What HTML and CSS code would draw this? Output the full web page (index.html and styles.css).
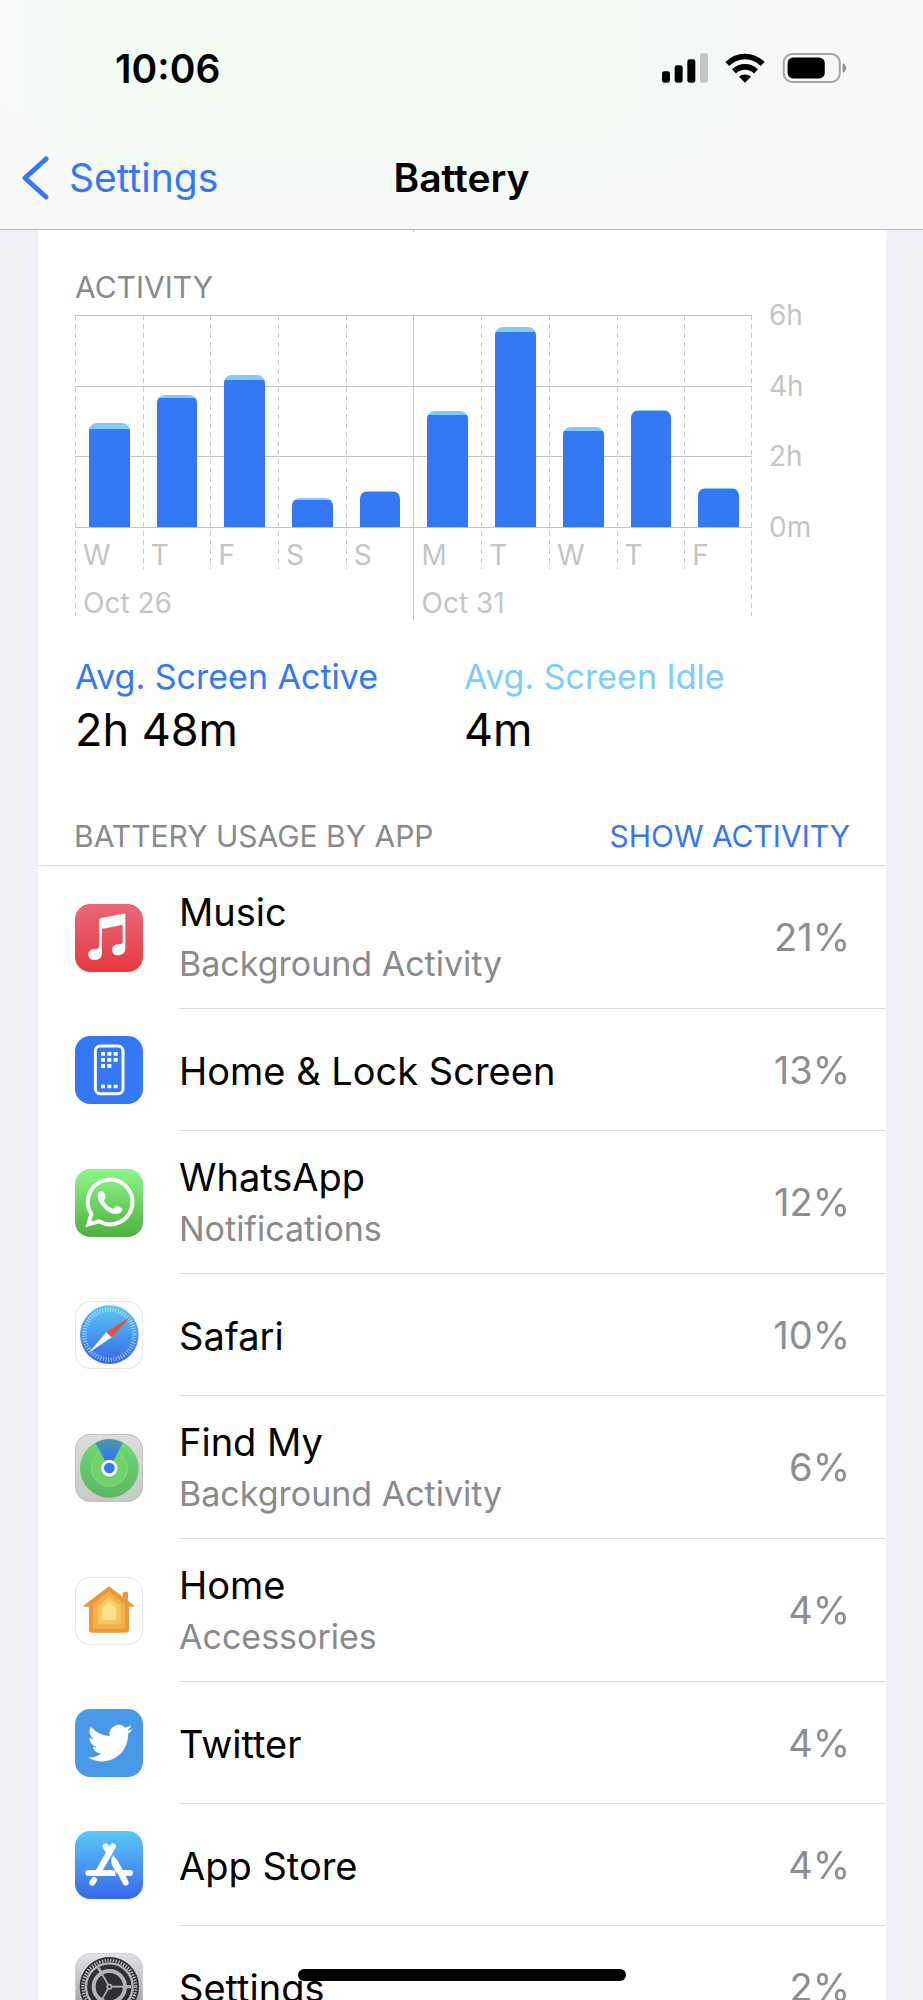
FILE: index.html
```html
<!DOCTYPE html>
<html lang="en">
<head>
<meta charset="utf-8">
<meta name="viewport" content="width=device-width, initial-scale=1">
<title>Battery</title>
<link rel="stylesheet" href="styles.css">
</head>
<body>
<div class="screen">
  <header class="top">
    <div class="status">
      <time class="clock">10:06</time>
      <div class="status-icons">
        <svg width="46" height="30" viewBox="0 0 138 90" aria-hidden="true">
          <rect x="0" y="55" width="24" height="34" rx="7"/><rect x="38" y="37" width="24" height="52" rx="7"/><rect x="76" y="19" width="24" height="70" rx="7"/><rect x="114" y="1" width="24" height="88" rx="7" fill="#c3c8c4"/>
        </svg>
        <svg width="40" height="30" viewBox="0 0 120 90" aria-hidden="true">
          <g fill="none" stroke="#000" stroke-width="17"><path d="M7 33C37 3 83 3 113 33"/><path d="M27 55C46 37 74 37 93 55"/></g>
          <path d="M42 71C52 62 68 62 78 71L60 89Z"/>
        </svg>
        <svg width="65" height="30" viewBox="0 0 195 92" aria-hidden="true">
          <rect x="3" y="3" width="172" height="86" rx="27" fill="none" stroke="#a2a5a3" stroke-width="6"/>
          <rect x="15" y="14" width="114" height="64" rx="17"/><path d="M184 31Q194 36 194 46T184 61Z" fill="#8e908f"/>
        </svg>
      </div>
    </div>
    <nav class="nav">
      <a class="back" href="#">
        <svg width="28" height="44" viewBox="0 0 28 44" aria-hidden="true"><path d="M25 3L4 22L25 41" fill="none" stroke="#3478f6" stroke-width="5" stroke-linecap="round" stroke-linejoin="round"/></svg>
        Settings
      </a>
      <h1 class="title">Battery</h1>
    </nav>
  </header>

  <main class="card">
    <div class="tick"></div>
    <section class="activity">
      <h2 class="caption">ACTIVITY</h2>
      <div class="chart">
        <div class="plot">
          <div class="day edge"><div class="slot"><div class="bar idle-6" style="height:49%"></div></div><span class="label">W</span><span class="label date">Oct 26</span></div>
          <div class="day"><div class="slot"><div class="bar idle-3" style="height:62.3%"></div></div><span class="label">T</span></div>
          <div class="day"><div class="slot"><div class="bar idle-5" style="height:71.5%"></div></div><span class="label">F</span></div>
          <div class="day"><div class="slot"><div class="bar idle-2" style="height:13.9%"></div></div><span class="label">S</span></div>
          <div class="day"><div class="slot"><div class="bar idle-1" style="height:17%"></div></div><span class="label">S</span></div>
          <div class="day week"><div class="slot"><div class="bar idle-4" style="height:54.7%"></div></div><span class="label">M</span><span class="label date">Oct 31</span></div>
          <div class="day"><div class="slot"><div class="bar idle-5" style="height:94.3%"></div></div><span class="label">T</span></div>
          <div class="day"><div class="slot"><div class="bar idle-4" style="height:47.2%"></div></div><span class="label">W</span></div>
          <div class="day"><div class="slot"><div class="bar idle-1" style="height:55.2%"></div></div><span class="label">T</span></div>
          <div class="day"><div class="slot"><div class="bar idle-1" style="height:18.6%"></div></div><span class="label">F</span></div>
        </div>
        <div class="axis"><span>6h</span><span>4h</span><span>2h</span><span>0m</span></div>
      </div>
      <dl class="stats">
        <div><dt class="active">Avg. Screen Active</dt><dd>2h 48m</dd></div>
        <div><dt class="idle">Avg. Screen Idle</dt><dd>4m</dd></div>
      </dl>
    </section>

    <section>
      <div class="list-head">
        <h2 class="caption">BATTERY USAGE BY APP</h2>
        <button class="toggle" type="button">SHOW ACTIVITY</button>
      </div>
      <ul class="apps">
        <li class="app">
          <svg class="icon" viewBox="0 0 204 204" aria-hidden="true">
            <defs><linearGradient id="music" x2="0" y2="1"><stop stop-color="#e8697b"/><stop offset="1" stop-color="#e6393f"/></linearGradient></defs>
            <rect width="204" height="204" rx="46" fill="url(#music)"/>
            <path fill="#fff" d="M73 49Q73 43 79 42L146 29Q151 28 151 34V133C151 147 142 154 129 154C118 154 111 147 111 138C111 128 119 122 129 121L138 120Q143 119 143 114V62L81 75V146C81 160 72 168 59 168C48 168 40 161 40 152C40 142 48 136 58 135L67 134Q73 133 73 127Z"/>
          </svg>
          <div class="info"><div class="text"><span class="name">Music</span><span class="note">Background Activity</span></div><span class="pct">21%</span></div>
        </li>
        <li class="app">
          <svg class="icon" viewBox="0 0 204 204" aria-hidden="true">
            <rect width="204" height="204" rx="46" fill="#3478f6"/>
            <rect x="61" y="30" width="83" height="143" rx="15" fill="none" stroke="#fff" stroke-width="9"/>
            <path fill="#fff" d="M78 48h12v11H78zM97 48h12v11H97zM116 48h12v11h-12zM78 66h12v11H78zM97 66h12v11H97zM116 66h12v11h-12zM78 84h12v12H78zM97 84h12v12H97zM78 146h12v11H78zM97 146h12v11H97zM116 146h12v11h-12z"/>
          </svg>
          <div class="info"><div class="text"><span class="name">Home &amp; Lock Screen</span></div><span class="pct">13%</span></div>
        </li>
        <li class="app">
          <svg class="icon" viewBox="0 0 204 204" aria-hidden="true">
            <defs><linearGradient id="wa" x2="0" y2="1"><stop stop-color="#8cf888"/><stop offset="1" stop-color="#4fb03f"/></linearGradient></defs>
            <rect width="204" height="204" rx="46" fill="url(#wa)"/>
            <path d="M49 135A67 67 0 1 1 72 157L40 166Z" fill="none" stroke="#fff" stroke-width="12"/>
            <path fill="#fff" d="M68 82C68 70 74 66 83 67C87 67 90 77 92 83C94 88 86 91 87 95C92 106 103 116 114 119C119 119 121 109 126 110L140 117C144 120 141 128 135 132C117 140 99 130 88 118C78 107 68 95 68 82Z"/>
          </svg>
          <div class="info"><div class="text"><span class="name">WhatsApp</span><span class="note">Notifications</span></div><span class="pct">12%</span></div>
        </li>
        <li class="app">
          <svg class="icon" viewBox="0 0 204 204" aria-hidden="true">
            <defs><linearGradient id="saf" x2="0" y2="1"><stop stop-color="#5ac8f5"/><stop offset="1" stop-color="#3569e8"/></linearGradient></defs>
            <rect x="1" y="1" width="202" height="202" rx="46" fill="#fff" stroke="#e4e4e6" stroke-width="3"/>
            <circle cx="103" cy="101" r="88" fill="url(#saf)"/>
            <circle cx="103" cy="101" r="75" fill="none" stroke="#fff" stroke-opacity=".65" stroke-width="13" stroke-dasharray="2.5 5.354"/>
            <path d="M168 46L94 94L110 109Z" fill="#eb4b3c"/><path d="M41 155L94 94L110 109Z" fill="#fff"/>
          </svg>
          <div class="info"><div class="text"><span class="name">Safari</span></div><span class="pct">10%</span></div>
        </li>
        <li class="app">
          <svg class="icon" viewBox="0 0 204 204" aria-hidden="true">
            <defs>
              <linearGradient id="fmbg" x2="0" y2="1"><stop stop-color="#dddddb"/><stop offset="1" stop-color="#c8c8c6"/></linearGradient>
              <linearGradient id="fm" x2="0" y2="1"><stop stop-color="#6edb76"/><stop offset="1" stop-color="#5cb562"/></linearGradient>
              <linearGradient id="ray" x2="0" y2="1"><stop stop-color="#4b9ba5"/><stop offset=".6" stop-color="#3879e2"/><stop offset="1" stop-color="#3478f6"/></linearGradient>
            </defs>
            <rect x="1" y="1" width="202" height="202" rx="46" fill="url(#fmbg)" stroke="#bdbdbb" stroke-width="3"/>
            <circle cx="103" cy="103" r="88" fill="url(#fm)"/>
            <circle cx="103" cy="103" r="54" fill="#72d268" stroke="#86dc7c" stroke-width="3"/>
            <path d="M103 103L61 26Q103 4 144 26Z" fill="url(#ray)"/>
            <circle cx="103" cy="104" r="26" fill="#548a70" opacity=".25"/><circle cx="103" cy="103" r="25" fill="#f5f7fa"/><circle cx="103" cy="102" r="16" fill="#3478f6"/>
          </svg>
          <div class="info"><div class="text"><span class="name">Find My</span><span class="note">Background Activity</span></div><span class="pct">6%</span></div>
        </li>
        <li class="app">
          <svg class="icon" viewBox="0 0 204 204" aria-hidden="true">
            <rect x="1" y="1" width="202" height="202" rx="46" fill="#fff" stroke="#e4e4e6" stroke-width="3"/>
            <path fill="#ec983a" d="M98 31Q102 27 106 31L143 60V49Q143 44 148 44H155Q159 44 159 49V72L178 86Q180 89 176 89H162V158Q162 167 153 167H51Q42 167 42 158V89H28Q24 88 27 85Z"/>
            <path fill="#f2b149" d="M102 43L150 82V155H54V82Z"/><path fill="#f6c55b" d="M102 58L137 87V141H68V87Z"/><path fill="#f8d571" d="M102 66L123 84Q126 87 126 91V128H78V91Q78 87 81 84Z" opacity=".6"/><path fill="#fae28b" d="M102 76L123 94V128H82V94Z"/>
          </svg>
          <div class="info"><div class="text"><span class="name">Home</span><span class="note">Accessories</span></div><span class="pct">4%</span></div>
        </li>
        <li class="app">
          <svg class="icon" viewBox="0 0 204 204" aria-hidden="true">
            <rect width="204" height="204" rx="46" fill="#4a99e9"/>
            <path fill="#fff" transform="translate(38 35) scale(5.62)" d="M23.95 4.57a10 10 0 0 1-2.82.77 4.96 4.96 0 0 0 2.16-2.72c-.95.55-2 .96-3.13 1.18a4.92 4.92 0 0 0-8.38 4.48C7.69 8.1 4.07 6.13 1.64 3.16a4.92 4.92 0 0 0 1.52 6.57 4.9 4.9 0 0 1-2.23-.61v.06a4.92 4.92 0 0 0 3.95 4.83 5 5 0 0 1-2.21.08 4.94 4.94 0 0 0 4.6 3.42A9.87 9.87 0 0 1 0 19.54a13.94 13.94 0 0 0 7.55 2.21c9.05 0 14-7.5 14-13.98 0-.21 0-.42-.02-.63a9.94 9.94 0 0 0 2.42-2.57z"/>
          </svg>
          <div class="info"><div class="text"><span class="name">Twitter</span></div><span class="pct">4%</span></div>
        </li>
        <li class="app">
          <svg class="icon" viewBox="0 0 204 204" aria-hidden="true">
            <defs><linearGradient id="as" x2="0" y2="1"><stop stop-color="#5cc8f8"/><stop offset="1" stop-color="#3768ea"/></linearGradient></defs>
            <rect width="204" height="204" rx="46" fill="url(#as)"/>
            <g fill="none" stroke="#fff" stroke-width="18" stroke-linecap="round">
              <path d="M92 46L103 64M114 46L68 126M40 126H112M164 126H165M57 147L52 155M122 96L152 155"/>
            </g>
            <path fill="#fff" d="M115 72Q104 88 112 104L126 128L140 111ZM105 117Q118 119 123 135H98ZM142 117H158V135H151Z"/>
          </svg>
          <div class="info"><div class="text"><span class="name">App Store</span></div><span class="pct">4%</span></div>
        </li>
        <li class="app">
          <svg class="icon" viewBox="0 0 204 204" aria-hidden="true">
            <defs><linearGradient id="set" x2="0" y2="1"><stop stop-color="#e2e2e7"/><stop offset="1" stop-color="#8f8f94"/></linearGradient></defs>
            <rect x="1" y="1" width="202" height="202" rx="46" fill="url(#set)" stroke="#c4c4c8" stroke-width="2"/>
            <circle cx="103" cy="101" r="89" fill="#303032"/>
            <circle cx="103" cy="101" r="79" fill="none" stroke="#bcbcc0" stroke-width="10" stroke-dasharray="4 4.273"/>
            <circle cx="103" cy="101" r="70" fill="none" stroke="#b5b5b9" stroke-width="7"/>
            <circle cx="103" cy="101" r="47" fill="none" stroke="#b5b5b9" stroke-width="12"/>
            <path d="M103 101H168M103 101L70 44M103 101L70 158" stroke="#b5b5b9" stroke-width="9"/>
            <circle cx="103" cy="101" r="40" fill="#303032"/>
            <path d="M103 101H144M103 101L82 65M103 101L82 137" stroke="#b5b5b9" stroke-width="5"/>
            <circle cx="103" cy="101" r="9" fill="#b5b5b9"/><circle cx="103" cy="101" r="4" fill="#303032"/>
          </svg>
          <div class="info"><div class="text"><span class="name">Settings</span></div><span class="pct">2%</span></div>
        </li>
      </ul>
    </section>
  </main>
  <div class="home-indicator"></div>
</div>
</body>
</html>
```
FILE: styles.css
```css
* { box-sizing: border-box; margin: 0; padding: 0; }

body {
  font-family: Inter, "Liberation Sans", sans-serif;
  color: #000;
  background: #f1f0f6;
}

.screen {
  position: relative;
  display: flex;
  flex-direction: column;
  height: 100vh;
  overflow: hidden;
}

.top {
  flex: none;
  border-bottom: 1px solid #b9bab9;
  background:
    linear-gradient(to bottom, rgba(248, 248, 248, 0) 45%, #f8f8f8 95%),
    linear-gradient(to right, #f8faf8, #f1fcf3 18%, #f1fcf4 60%, #f8f8f8 88%);
}

.status {
  display: flex;
  justify-content: space-between;
  align-items: center;
  height: 128px;
  padding: 8px 76px 0 115px;
}

.clock { font-size: 39px; font-weight: 600; }

.status-icons { display: flex; align-items: center; gap: 17px; }

.nav {
  display: grid;
  grid-template-columns: 1fr auto 1fr;
  align-items: center;
  height: 101px;
  padding: 0 21px 2px;
  font-size: 39px;
}

.back {
  display: flex;
  align-items: center;
  gap: 20px;
  color: #3478f6;
  text-decoration: none;
}

.title { font-size: 39px; font-weight: 600; }

.card {
  flex: 1;
  min-height: 0;
  margin: 0 37px 0 38px;
  background: #fff;
  overflow: hidden;
}

.tick { width: 1px; height: 2px; margin-left: 375px; background: #c4c4c6; }

.activity { padding: 35px 37px 0; }

.caption {
  font-size: 30px;
  font-weight: 400;
  line-height: 40px;
  color: #8a8a8d;
}

.chart {
  display: grid;
  grid-template-columns: 1fr 80px;
  gap: 17px;
  margin-top: 8px;
}

.plot {
  --line: linear-gradient(#c4c4c6, #c4c4c6);
  --dash: repeating-linear-gradient(to bottom, #c8c8ca 0 5px, transparent 5px 9px);
  display: grid;
  grid-template-columns: repeat(10, 1fr);
  height: 308px;
  background:
    var(--line) 0 0 / 100% 1px no-repeat,
    var(--line) 0 71px / 100% 1px no-repeat,
    var(--line) 0 141px / 100% 1px no-repeat,
    var(--line) 0 212px / 100% 1px no-repeat,
    var(--dash) 100% 0 / 1px 301px no-repeat;
}

.day {
  min-width: 0;
  background: var(--dash) 0 0 / 1px 254px no-repeat;
}

.day.edge { background-size: 1px 301px; }
.day.week { background: var(--line) 0 0 / 1px 305px no-repeat; }

.slot {
  display: flex;
  align-items: flex-end;
  height: 212px;
  padding: 0 13px 0 14px;
}

.bar {
  flex: 1;
  border-radius: 8px 8px 0 0;
  background: linear-gradient(#80cdfb, #80cdfb) 0 0 / 100% var(--idle) no-repeat #3478f6;
}

.idle-1 { --idle: 1px; }
.idle-2 { --idle: 2px; }
.idle-3 { --idle: 3px; }
.idle-4 { --idle: 4px; }
.idle-5 { --idle: 5px; }
.idle-6 { --idle: 6px; }

.label {
  display: block;
  padding-left: 8px;
  font-size: 28px;
  line-height: 56px;
  color: #c5c5c7;
  white-space: nowrap;
}

.label.date { line-height: 40px; }

.axis {
  display: flex;
  flex-direction: column;
  justify-content: space-between;
  height: 240px;
  margin-top: -14px;
  font-size: 28px;
  line-height: 28px;
  color: #c5c5c7;
}

.stats {
  display: grid;
  grid-template-columns: 1fr 1fr;
  gap: 4px;
  margin-top: 30px;
}

.stats dt { font-size: 34px; line-height: 48px; }
.stats dd { font-size: 45px; line-height: 58px; }
.active { color: #3478f6; }
.idle { color: #80cdfb; }

.list-head {
  display: flex;
  justify-content: space-between;
  padding: 57px 36px 9px;
  border-bottom: 1px solid #dcdcde;
}

.toggle {
  border: 0;
  background: none;
  font-family: inherit;
  font-size: 30px;
  line-height: 40px;
  color: #3478f6;
}

.apps { list-style: none; }

.app { display: flex; align-items: center; gap: 36px; padding-left: 37px; }

.icon { flex: none; width: 68px; height: 68px; }

.info {
  flex: 1;
  display: flex;
  align-items: center;
  justify-content: space-between;
  padding: 21px 36px 21px 0;
  border-bottom: 1px solid #dcdcde;
}

.text { display: flex; flex-direction: column; gap: 4px; }

.name { font-size: 38px; line-height: 50px; }
.name:only-child { padding: 16px 0 13px; }
.note { font-size: 34px; line-height: 46px; color: #8a8a8d; }
.pct { font-size: 38px; color: #8e8e92; }

.home-indicator {
  position: absolute;
  bottom: 19px;
  left: 50%;
  width: 328px;
  height: 12px;
  margin-left: -164px;
  border-radius: 6px;
  background: #000;
}
```
